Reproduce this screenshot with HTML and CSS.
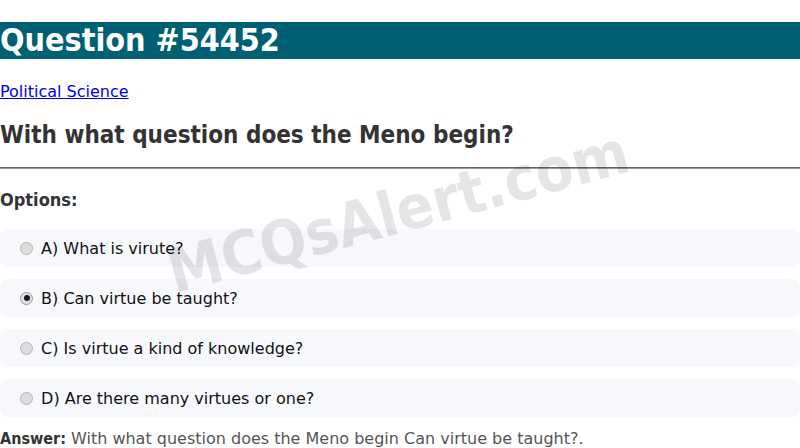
FILE: index.html
```html
<!DOCTYPE html>
<html>
<head>
<meta charset="utf-8">
<link rel="stylesheet" href="styles.css">
</head>
<body>
<div class="page">
  <h1 class="title">Question #54452</h1>
  <p class="cat"><a href="#">Political Science</a></p>
  <h2 class="question">With what question does the Meno begin?</h2>
  <hr class="rule">
  <h3 class="opts-head">Options:</h3>
  <div class="options">
    <label class="opt"><input type="radio" name="o" disabled> A) What is virute?</label>
    <label class="opt"><input type="radio" name="o" disabled checked> B) Can virtue be taught?</label>
    <label class="opt"><input type="radio" name="o" disabled> C) Is virtue a kind of knowledge?</label>
    <label class="opt"><input type="radio" name="o" disabled> D) Are there many virtues or one?</label>
  </div>
  <p class="answer"><b>Answer:</b> With what question does the Meno begin Can virtue be taught?.</p>
  <div class="watermark">MCQsAlert.com</div>
</div>
</body>
</html>
```
FILE: styles.css
```css
html, body {
  margin: 0;
  padding: 0;
  background: #fff;
}
body {
  font-family: "DejaVu Sans", sans-serif;
  font-size: 16px;
  color: #333;
}
.page {
  position: relative;
  overflow: hidden;
  height: 448px;
}
.title, .question, .opts-head, .answer b, .watermark {
  font-family: "DejaVu Sans Condensed", "DejaVu Sans", sans-serif;
  font-stretch: condensed;
}
.title {
  margin: 22px 0 0;
  background: #006073;
  color: #fff;
  font-size: 32px;
  font-weight: bold;
  line-height: 37px;
}
.cat {
  margin: 23px 0 0;
  line-height: 19px;
}
.cat a {
  color: #0000ee;
}
.question {
  margin: 20px 0 0;
  font-size: 24px;
  line-height: 28px;
  color: #333;
}
.rule {
  margin: 18px 0 0;
  border: 0;
  border-top: 1px solid #666;
  border-bottom: 1px solid #999;
  height: 0;
}
.opts-head {
  margin: 20px 0 0;
  font-size: 18px;
  line-height: 21px;
  color: #333;
}
.options {
  margin-top: 19px;
  display: flex;
  flex-direction: column;
  gap: 12px;
}
.opt {
  display: flex;
  align-items: center;
  height: 38px;
  padding-left: 20px;
  background: #f7f8fc;
  border-radius: 8px;
  color: #111;
  white-space: pre;
}
.opt input {
  appearance: none;
  -webkit-appearance: none;
  box-sizing: border-box;
  width: 13px;
  height: 13px;
  margin: 0 3px 0 0;
  border: 1px solid #b4b4b4;
  border-radius: 50%;
  background: #dcdcdc;
  position: relative;
}
.opt input:checked {
  background: #e2e2e2;
  border-color: #9a9a9a;
}
.opt input:checked::after {
  content: "";
  position: absolute;
  left: 2.5px;
  top: 2.5px;
  width: 6px;
  height: 6px;
  border-radius: 50%;
  background: #1a1a1a;
}
.answer {
  margin: 12px 0 0;
  color: #555;
  line-height: 19px;
}
.answer b {
  color: #333;
}
.watermark {
  position: absolute;
  left: 178px;
  top: 236px;
  font-size: 61px;
  line-height: 71px;
  font-weight: bold;
  color: rgba(0, 0, 0, 0.1);
  transform: rotate(-15deg);
  transform-origin: left bottom;
  pointer-events: none;
  white-space: nowrap;
}
```
